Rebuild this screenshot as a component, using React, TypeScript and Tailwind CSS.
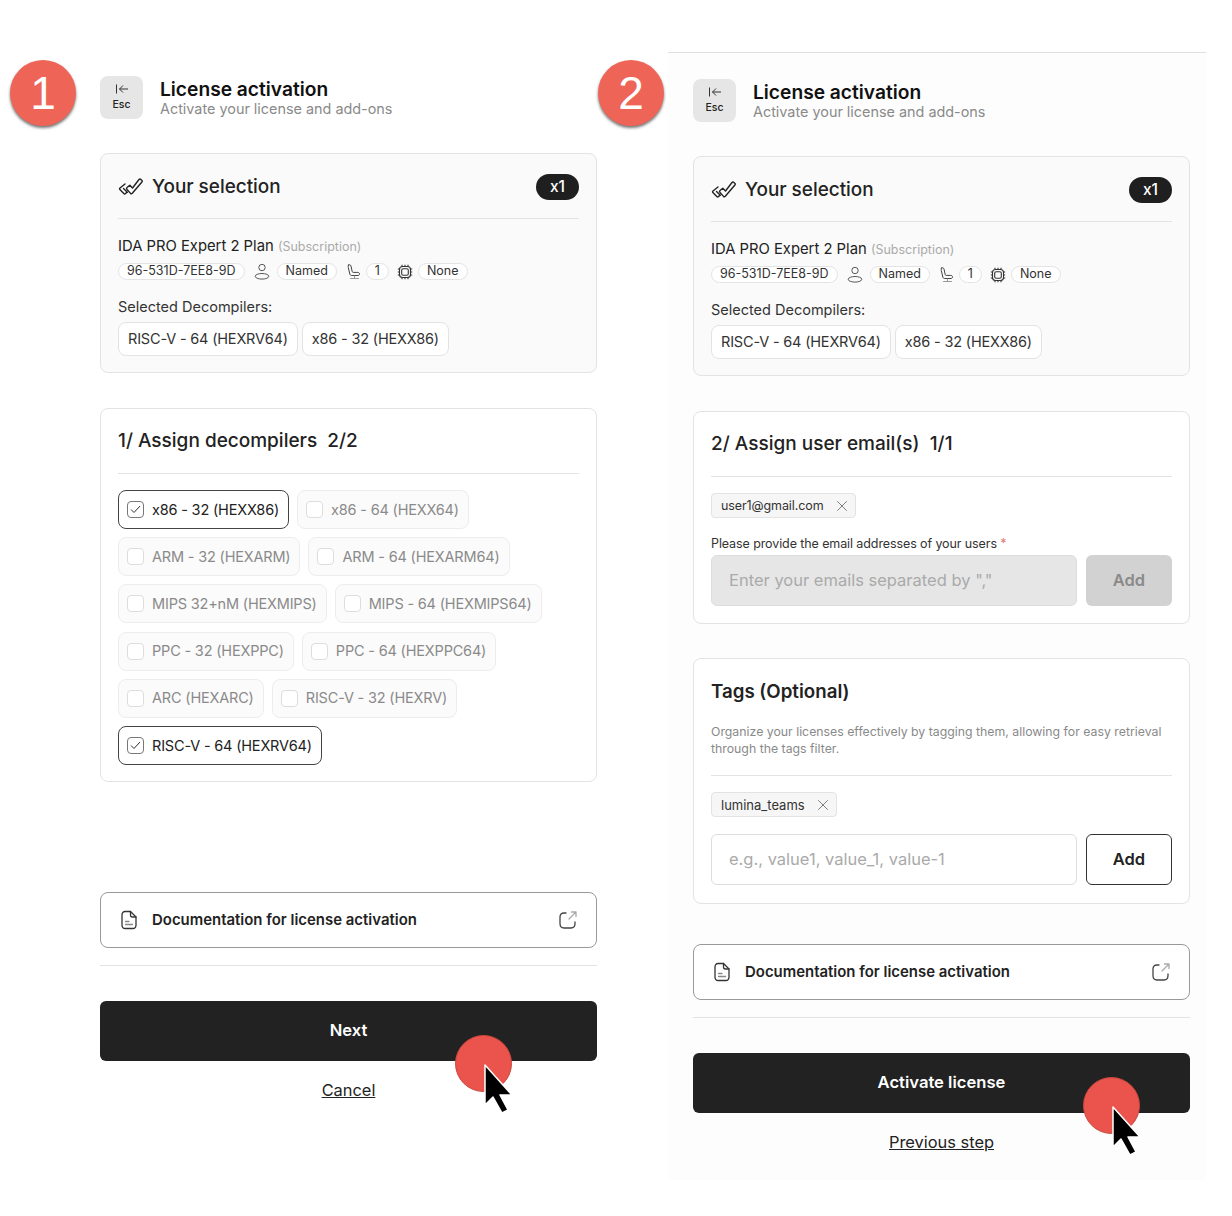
import React from 'react';
import { X } from 'lucide-react';

const decompilers = [
  ['x86 - 32 (HEXX86)', true, 'x86 - 64 (HEXX64)', false],
  ['ARM - 32 (HEXARM)', false, 'ARM - 64 (HEXARM64)', false],
  ['MIPS 32+nM (HEXMIPS)', false, 'MIPS - 64 (HEXMIPS64)', false],
  ['PPC - 32 (HEXPPC)', false, 'PPC - 64 (HEXPPC64)', false],
  ['ARC (HEXARC)', false, 'RISC-V - 32 (HEXRV)', false],
] as const;

const DoubleCheck = () => (
  <svg width="26" height="20" viewBox="0 0 26 20" fill="none" stroke="#222" strokeWidth="1.400" strokeLinejoin="round" strokeLinecap="round">
    <path d="M9 10.500l2.800-2.300 2.700 2.800L21 2.500c.6-.6 1.200-.6 1.800-.1l1 .9c.6.500.6 1.100.1 1.700l-9.600 11.300c-.6.6-1.200.6-1.800.1L9 12.500c-.6-.6-.6-1.400 0-2z" />
    <path d="M7 7L2 11c-.6.5-.6 1.100-.1 1.600l3.900 3.900c.5.5 1.100.5 1.600.1l1.300-1.100" />
    <path d="M5.500 11.500l3.800 3.800" />
  </svg>
);

const UserIcon = () => (
  <svg width="16" height="17" viewBox="0 0 16 17" fill="none" stroke="#444" strokeWidth="0.900">
    <circle cx="8" cy="4.500" r="3.200" />
    <ellipse cx="8" cy="13.300" rx="6.800" ry="2.800" />
  </svg>
);

const SeatIcon = () => (
  <svg width="16" height="16" viewBox="0 0 16 16" fill="none" stroke="#444" strokeWidth="1" strokeLinecap="round" strokeLinejoin="round">
    <path d="M2.500 1c1.300-.5 2.200 0 2.500 1l1.200 5.500c.1.600.5.9 1 .9h4.600c1 0 1.700.7 1.700 1.600s-.7 1.500-1.500 1.500H5.700c-1 0-1.700-.6-1.900-1.500L2.300 3.500c-.2-1-.3-2 .2-2.500z" />
    <path d="M4.500 14.500h8M8.500 12v2.500" stroke="#999" />
  </svg>
);

const ChipIcon = () => (
  <svg width="16" height="16" viewBox="0 0 16 16" fill="none" stroke="#333" strokeWidth="1.100">
    <rect x="2.500" y="2.500" width="11" height="11" rx="3" />
    <rect x="4.700" y="4.700" width="6.600" height="6.600" rx="1.500" />
    <path d="M5 .8v1.700M8 .8v1.700M11 .8v1.700M5 13.500v1.700M8 13.500v1.700M11 13.500v1.700M.8 5h1.700M.8 8h1.700M.8 11h1.700M13.500 5h1.700M13.500 8h1.700M13.500 11h1.700" />
  </svg>
);

const DocIcon = () => (
  <svg width="18" height="20" viewBox="0 0 18 20" fill="none" stroke="#333" strokeWidth="1.300" strokeLinejoin="round" strokeLinecap="round">
    <path d="M5 1.500h5.500L16 7v8c0 2-1.300 3.500-3.200 3.500H5.200C3.300 18.500 2 17 2 15V5c0-2 1.300-3.500 3-3.500z" />
    <path d="M10.500 1.500V5c0 1.200.8 2 2 2H16" />
    <path d="M5.500 11.500h3.500M5.500 14.500h7" stroke="#888" />
  </svg>
);

const ExternalIcon = () => (
  <svg width="20" height="20" viewBox="0 0 20 20" fill="none" strokeLinecap="round" strokeLinejoin="round" strokeWidth="1.300">
    <path d="M8 3H6C3.500 3 2 4.500 2 7v6.500C2 16.500 3.500 18 6 18h7c2.500 0 4-1.500 4-4.500V12" stroke="#444" />
    <path d="M11 9l7-7M13.500 2H18v4.500" stroke="#aaa" />
  </svg>
);

const EscButton = () => (
  <div className="flex h-[43px] w-[43px] flex-col items-center rounded-lg bg-[#e6e6e6] pt-[7px]">
    <svg width="14" height="12" viewBox="0 0 14 12" fill="none" stroke="#333" strokeWidth="1">
      <path d="M1.500 1.500v9M13 6H4.500M8 2.500L4.500 6 8 9.500" />
    </svg>
    <span className="mt-[3px] text-[10.500px] font-medium leading-[14px] text-[#222]">Esc</span>
  </div>
);

const Header = () => (
  <div className="flex items-center gap-[17px]">
    <EscButton />
    <div className="-mt-[3px]">
      <h1 className="text-[19.200px] font-semibold leading-[24px] text-[#111]">License activation</h1>
      <p className="text-[14.400px] leading-[15px] text-[#8a8a8a]">Activate your license and add-ons</p>
    </div>
  </div>
);

const Pill = ({ children }: { children: React.ReactNode }) => (
  <span className="flex h-[17px] items-center rounded-full border border-[#e3e3e3] bg-white px-[8px] text-[12.500px] text-[#333]">{children}</span>
);

const SelectionCard = () => (
  <section className="h-[220px] rounded-lg border border-[#e3e3e3] bg-[#fafafa] px-[17px]">
    <div className="flex h-[65px] items-center justify-between border-b border-[#e3e3e3] pt-[2px]">
      <div className="flex items-center gap-[8px]">
        <DoubleCheck />
        <span className="text-[18.900px] font-medium text-[#222]">Your selection</span>
      </div>
      <span className="flex h-[26px] w-[43px] items-center justify-center rounded-full bg-[#1f1f1f] text-[15.500px] font-medium text-white">x1</span>
    </div>
    <div className="mt-[18px] text-[14.800px] leading-[18px] text-[#222]">
      IDA PRO Expert 2 Plan <span className="text-[12.500px] text-[#aaa]">(Subscription)</span>
    </div>
    <div className="mt-[7px] flex items-center">
      <Pill>96-531D-7EE8-9D</Pill>
      <span className="ml-[9px] mr-[7px] flex"><UserIcon /></span>
      <Pill>Named</Pill>
      <span className="ml-[9px] mr-[4px] flex"><SeatIcon /></span>
      <Pill>1</Pill>
      <span className="ml-[8px] mr-[5px] flex"><ChipIcon /></span>
      <Pill>None</Pill>
    </div>
    <div className="mt-[18px] text-[14.500px] leading-[18px] text-[#333]">Selected Decompilers:</div>
    <div className="mt-[6px] flex gap-[4px]">
      {['RISC-V - 64 (HEXRV64)', 'x86 - 32 (HEXX86)'].map(name => (
        <span key={name} className="flex h-[34px] items-center rounded-lg border border-[#e3e3e3] bg-white px-[9px] text-[14.500px] tracking-[-0.18px] text-[#333]">{name}</span>
      ))}
    </div>
  </section>
);

const Option = ({ label, checked }: { label: string; checked: boolean }) => (
  <div className={`flex h-[39px] items-center gap-[8px] rounded-lg border pl-[8px] pr-[9px] text-[14.500px] tracking-[-0.18px] ${checked ? 'border-[#444] bg-white text-[#222]' : 'border-[#ededed] bg-[#fbfbfb] text-[#8a8a8a]'}`}>
    <span className={`flex h-[17px] w-[17px] items-center justify-center rounded-[4px] border ${checked ? 'border-[#777]' : 'border-[#ddd] bg-white'}`}>
      {checked && (
        <svg width="11" height="9" viewBox="0 0 11 9" fill="none" stroke="#333" strokeWidth="1">
          <path d="M1 4.500L4 7.500 10 1" />
        </svg>
      )}
    </span>
    {label}
  </div>
);

const AssignDecompilers = () => (
  <section className="mt-[35px] h-[374px] rounded-lg border border-[#e3e3e3] bg-white px-[17px]">
    <h2 className="flex h-[65px] items-center border-b border-[#e3e3e3] text-[19px] font-medium text-[#222]">1/ Assign decompilers&nbsp; 2/2</h2>
    <div className="mt-[16px] flex flex-col gap-[8.200px]">
      {decompilers.map(([a, aChecked, b, bChecked]) => (
        <div key={a} className="flex gap-[8px]">
          <Option label={a} checked={aChecked} />
          <Option label={b} checked={bChecked} />
        </div>
      ))}
      <div className="flex">
        <Option label="RISC-V - 64 (HEXRV64)" checked />
      </div>
    </div>
  </section>
);

const Tag = ({ label, large }: { label: string; large?: boolean }) => (
  <span className={`inline-flex h-[25px] items-center gap-[9px] rounded-[4px] border border-[#e3e3e3] bg-[#f6f6f6] pl-[9px] pr-[4px] text-[#333] ${large ? 'text-[13px]' : 'text-[12.500px] tracking-[-0.1px]'}`}>
    <span className="relative top-[1px]">{label}</span>
    <X className="h-[18px] w-[18px] text-[#666]" strokeWidth={1.100} />
  </span>
);

const AssignEmails = () => (
  <section className="mt-[35px] h-[213px] rounded-lg border border-[#e3e3e3] bg-white px-[17px]">
    <h2 className="flex h-[65px] items-center border-b border-[#e3e3e3] text-[19px] font-medium text-[#222]">2/ Assign user email(s)&nbsp; 1/1</h2>
    <div className="mt-[16px] flex">
      <Tag label="user1@gmail.com" />
    </div>
    <div className="mt-[17px] text-[12.500px] leading-[18px] tracking-[-0.1px] text-[#333]">
      Please provide the email addresses of your users <span className="text-[#e57373]">*</span>
    </div>
    <div className="mt-[2px] flex gap-[9px]">
      <div className="flex h-[51px] flex-1 items-center rounded-md border border-[#ddd] bg-[#e6e6e6] px-[17px] text-[16.500px] text-[#aaa]">Enter your emails separated by ","</div>
      <div className="flex h-[51px] w-[86px] items-center justify-center rounded-md bg-[#d2d2d2] text-[16.500px] font-semibold text-[#8a8a8a]">Add</div>
    </div>
  </section>
);

const TagsCard = () => (
  <section className="mt-[34px] h-[246px] rounded-lg border border-[#e3e3e3] bg-white px-[17px]">
    <h2 className="pt-[20px] text-[18.700px] font-semibold leading-[26px] text-[#222]">Tags (Optional)</h2>
    <p className="mt-[18px] border-b border-[#e3e3e3] pb-[18px] text-[12.300px] leading-[17px] text-[#8a8a8a]">
      Organize your licenses effectively by tagging them, allowing for easy retrieval through the tags filter.
    </p>
    <div className="mt-[16px] flex">
      <Tag label="lumina_teams" large />
    </div>
    <div className="mt-[17px] flex gap-[9px]">
      <div className="flex h-[51px] flex-1 items-center rounded-md border border-[#ddd] bg-white px-[17px] text-[16.500px] text-[#aaa]">e.g., value1, value_1, value-1</div>
      <div className="flex h-[51px] w-[86px] items-center justify-center rounded-md border border-[#333] bg-white text-[16.500px] font-semibold text-[#222]">Add</div>
    </div>
  </section>
);

const Footer = ({ action, link }: { action: string; link: string }) => (
  <>
    <div className="flex h-[56px] items-center justify-between rounded-lg border border-[#999] bg-white pl-[19px] pr-[18px]">
      <div className="flex items-center gap-[14px]">
        <DocIcon />
        <span className="text-[14.950px] font-semibold text-[#222]">Documentation for license activation</span>
      </div>
      <ExternalIcon />
    </div>
    <div className="mt-[17px] border-t border-[#e3e3e3]" />
    <div className="mt-[35px] flex h-[60px] items-center justify-center rounded-md bg-[#222] pb-[2px] text-[16.600px] font-semibold text-white">{action}</div>
    <div className="mt-[17px] text-center text-[16.400px] leading-[24px] text-[#222] underline">{link}</div>
  </>
);

const StepBadge = ({ n, className }: { n: number; className: string }) => (
  <div className={`absolute flex h-[66px] w-[66px] items-center justify-center rounded-full bg-[#ee6557] font-['Liberation_Sans',sans-serif] text-[46px] text-white shadow-[0_2px_3px_rgba(0,0,0,0.55)] ${className}`}>{n}</div>
);

const ClickCursor = ({ className }: { className: string }) => (
  <div className={`absolute h-[80px] w-[60px] ${className}`}>
    <div className="h-[57px] w-[57px] rounded-full border border-[#c9483f] bg-[#ea544c]" />
    <svg className="absolute left-[28px] top-[28px]" width="32" height="54" viewBox="0 0 32 54">
      <path d="M2 2v40l8-8 9 16 6-3-8-15h12z" fill="#000" stroke="#fff" strokeWidth="1.500" strokeLinejoin="round" />
    </svg>
  </div>
);

export default function App() {
  return (
    <div className="relative flex h-[1216px] w-[1232px] overflow-hidden bg-white font-['Inter',sans-serif]">
      <div className="ml-[100px] w-[497px] pt-[76px]">
        <Header />
        <div className="mt-[34px]">
          <SelectionCard />
          <AssignDecompilers />
        </div>
        <div className="mt-[110px]">
          <Footer action="Next" link="Cancel" />
        </div>
      </div>

      <div className="ml-[71px] mt-[52px] h-[1128px] w-[538px] border-t border-[#e0e0e0] bg-[#fdfdfd] pl-[25px] pr-[16px] pt-[26px]">
        <Header />
        <div className="mt-[34px]">
          <SelectionCard />
          <AssignEmails />
          <TagsCard />
        </div>
        <div className="mt-[40px]">
          <Footer action="Activate license" link="Previous step" />
        </div>
      </div>

      <StepBadge n={1} className="left-[10px] top-[60px]" />
      <StepBadge n={2} className="left-[598px] top-[60px]" />
      <ClickCursor className="left-[455px] top-[1035px]" />
      <ClickCursor className="left-[1083px] top-[1077px]" />
    </div>
  );
}
